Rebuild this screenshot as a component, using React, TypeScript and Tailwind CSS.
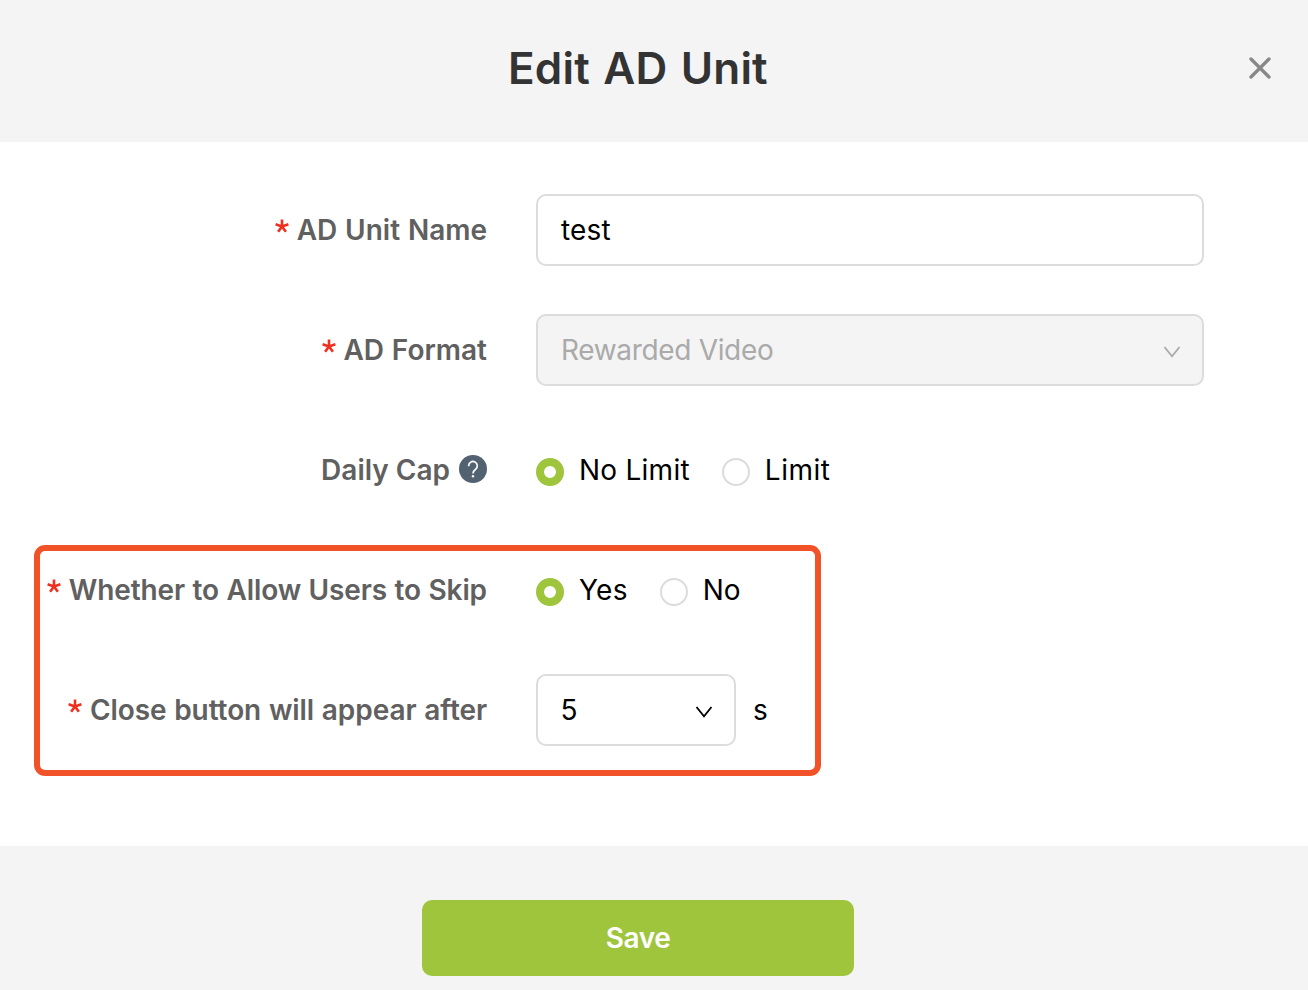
import React from "react";

function Label({ children, required, className = "" }: { children: React.ReactNode; required?: boolean; className?: string }) {
  return (
    <div className="flex w-[488px] shrink-0 items-center justify-end pr-px font-semibold whitespace-nowrap text-[#606060]">
      {required && (
        <svg className="mr-[7.5px] -mt-2 size-[14px] text-[#f0301e]" viewBox="0 0 14 14" fill="none" stroke="currentColor" strokeWidth="2.6">
          <path d="M7 7.4V.6M7 7.4.6 5.3M7 7.4l6.4-2.1M7 7.4l-3.9 5.4M7 7.4l3.9 5.4" />
        </svg>
      )}
      <span className={className}>{children}</span>
    </div>
  );
}

function Radio({ checked, label, className = "" }: { checked?: boolean; label: string; className?: string }) {
  return (
    <label className="flex items-center">
      <span
        className={
          checked
            ? "mt-1 size-7 rounded-full border-8 border-[#9fc53d] bg-white"
            : "mt-1 size-7 rounded-full border-2 border-[#dcdcdc] bg-white"
        }
      />
      <span className={`ml-[15px] whitespace-nowrap ${className}`}>{label}</span>
    </label>
  );
}

function Chevron({ className }: { className: string }) {
  return (
    <svg className={className} width="18" height="12" viewBox="0 0 18 12" fill="none" stroke="currentColor" strokeWidth="1.8">
      <path d="M1.5 1 9 10.3 16.5 1" />
    </svg>
  );
}

export default function App() {
  return (
    <div className="relative flex h-[990px] w-[1308px] flex-col overflow-hidden bg-white font-['Inter','Liberation_Sans',sans-serif] text-[28px] leading-10 text-black">
      <header className="flex h-[142px] shrink-0 items-start justify-between bg-[#f4f4f4] pt-[41px] pr-[37px] pl-[508px]">
        <h1 className="text-[44px] leading-[54px] font-semibold tracking-[0.2px] whitespace-nowrap text-[#333] [word-spacing:2px]">Edit AD Unit</h1>
        <button className="mt-4 text-[#888]" aria-label="Close">
          <svg width="22" height="22" viewBox="0 0 22 22" fill="none" stroke="currentColor" strokeWidth="3.3" strokeLinecap="round">
            <path d="m2 2 18 18M20 2 2 20" />
          </svg>
        </button>
      </header>

      <main className="flex h-[704px] shrink-0 flex-col gap-12 pt-[52px]">
        <div className="flex h-[72px] items-center gap-12">
          <Label required className="[word-spacing:0.8px]">AD Unit Name</Label>
          <div className="flex h-[72px] w-[668px] items-center rounded-[10px] border-2 border-[#dcdcdc] pl-[23px]">
            <span className="tracking-[0.2px]">test</span>
          </div>
        </div>
        <div className="flex h-[72px] items-center gap-12">
          <Label required className="[word-spacing:0.8px]">AD Format</Label>
          <div className="flex h-[72px] w-[668px] items-center justify-between rounded-[10px] border-2 border-[#dcdcdc] bg-[#f4f4f4] pr-[21px] pl-[23px] text-[#aaa]">
            <span className="tracking-[-0.33px]">Rewarded Video</span>
            <Chevron className="mt-1 text-[#aaa]" />
          </div>
        </div>
        <div className="flex h-[72px] items-center gap-12">
          <Label>
            <span className="flex items-center">
              <span>Daily Cap</span>
              <svg className="-mt-0.5 ml-[9px] size-7" viewBox="0 0 28 28" fill="none">
                <circle cx="14" cy="14" r="14" fill="#526270" />
                <path d="M9.7 11.2V10.8a4.3 4.3 0 1 1 6.9 3.4c-1.8 1.4-2.6 2.1-2.6 4.2" stroke="#fff" strokeWidth="1.7" />
                <circle cx="14" cy="21.3" r="1.2" fill="#fff" />
              </svg>
            </span>
          </Label>
          <div className="flex items-center gap-8">
            <Radio checked label="No Limit" className="tracking-[0.25px]" />
            <Radio label="Limit" className="tracking-[0.5px]" />
          </div>
        </div>
        <div className="flex h-[72px] items-center gap-12">
          <Label required className="tracking-[-0.1px] [word-spacing:0.5px]">Whether to Allow Users to Skip</Label>
          <div className="flex items-center gap-8">
            <Radio checked label="Yes" className="tracking-[0.25px]" />
            <Radio label="No" />
          </div>
        </div>
        <div className="flex h-[72px] items-center gap-12">
          <Label required className="tracking-[-0.08px] [word-spacing:0.8px]">Close button will appear after</Label>
          <div className="flex items-center gap-[17px]">
            <div className="flex h-[72px] w-[200px] items-center justify-between rounded-[10px] border-2 border-[#dcdcdc] pr-[21px] pl-[22.5px]">
              <span>5</span>
              <Chevron className="mt-1 text-black" />
            </div>
            <span>s</span>
          </div>
        </div>
      </main>

      <footer className="flex h-[144px] shrink-0 justify-center bg-[#f4f4f4] pt-[54px] pr-8">
        <button className="h-[76px] w-[432px] rounded-[10px] bg-[#9fc53d] font-semibold tracking-[-0.4px] text-white">Save</button>
      </footer>

      <div className="pointer-events-none absolute top-[545px] left-[33.5px] h-[231px] w-[787.5px] rounded-[11px] border-6 border-[#f15228]" />
    </div>
  );
}
